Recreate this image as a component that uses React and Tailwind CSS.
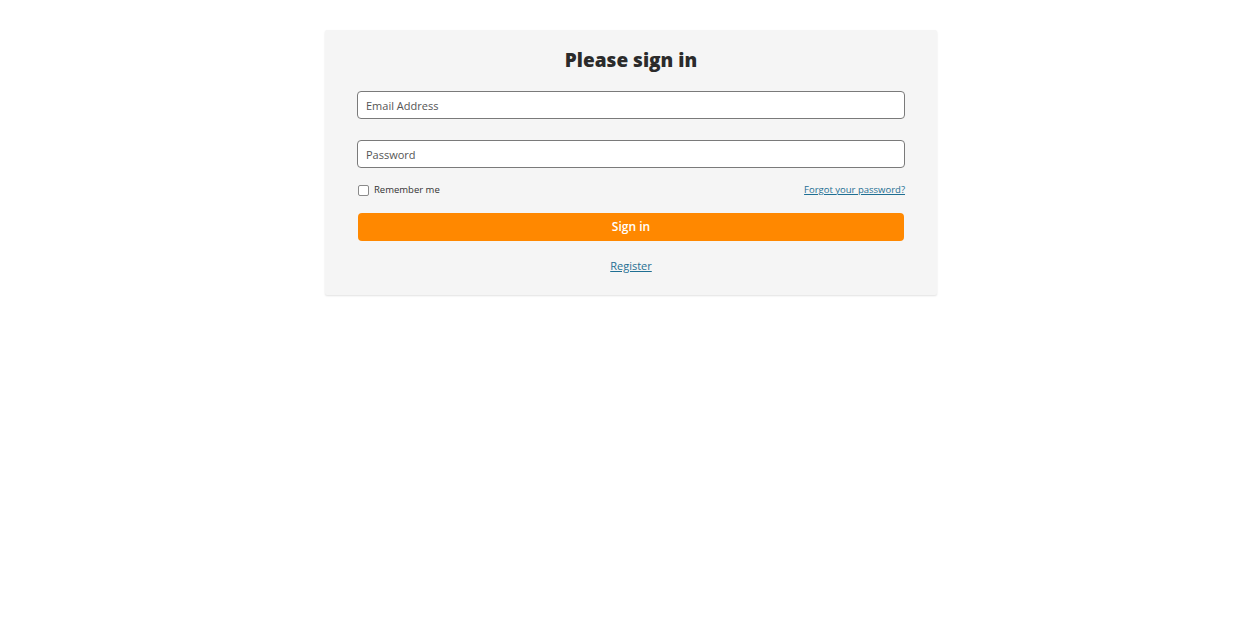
import React, { useState } from 'react';

const font = { fontFamily: '"Open Sans", "Noto Sans", sans-serif' };

export default function App() {
    const [remember, setRemember] = useState(false);

    return (
        <div className="min-h-screen bg-white pt-[30px] pl-[2px]" style={font}>
            <div className="mx-auto w-[612px] bg-[#f5f5f5] rounded-[2px] shadow-[0_1px_2px_rgba(0,0,0,0.12)] px-8 pt-[16px] pb-[19px]">
                <h1 className="text-center text-[19px] font-extrabold text-[#2b2b2b] leading-[28px]">Please sign in</h1>

                <form className="mt-[17px] flex flex-col" onSubmit={(e) => e.preventDefault()}>
                    <input type="email" placeholder="Email Address"
                        className="h-[28px] w-full rounded-[4px] border border-[#7a7a7a] bg-white px-2 text-[11px] text-[#333] placeholder:text-[#555] outline-none" />
                    <input type="password" placeholder="Password"
                        className="mt-[21px] h-[28px] w-full rounded-[4px] border border-[#7a7a7a] bg-white px-2 text-[11px] text-[#333] placeholder:text-[#555] outline-none" />

                    <div className="mt-[15px] flex items-center justify-between">
                        <label className="flex items-center gap-[5px] text-[9.5px] text-[#333]">
                            <input type="checkbox" checked={remember} onChange={e => setRemember(e.target.checked)}
                                className="ml-px h-[11px] w-[11px] appearance-none rounded-[2px] border border-[#8a8a8a] bg-white" />
                            Remember me
                        </label>
                        <a href="#" className="text-[9.5px] text-[#1f6f93] underline">Forgot your password?</a>
                    </div>

                    <button type="submit" className="mx-px mt-[16px] h-[28px] rounded-[4px] bg-[#ff8800] text-[12px] font-semibold text-white">Sign in</button>

                    <div className="mt-[11px] text-center">
                        <a href="#" className="text-[11px] text-[#1f6f93] underline">Register</a>
                    </div>
                </form>
            </div>
        </div>
    );
}
